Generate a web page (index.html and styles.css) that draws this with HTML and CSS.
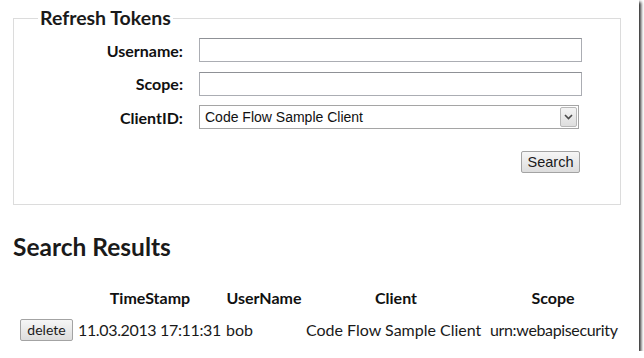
FILE: index.html
```html
<!DOCTYPE html>
<html lang="en">
<head>
    <meta charset="UTF-8">
    <title>Refresh Tokens</title>
    <link rel="stylesheet" href="styles.css">
</head>
<body>
    <div class="shot">
        <fieldset class="search-box">
            <legend>Refresh Tokens</legend>
            <div class="form-grid">
                <label for="username">Username:</label>
                <input type="text" id="username">

                <label for="scope">Scope:</label>
                <input type="text" id="scope">

                <label for="client">ClientID:</label>
                <div class="select-wrap">
                    <select id="client">
                        <option>Code Flow Sample Client</option>
                    </select>
                    <span class="select-arrow">
                        <svg width="9" height="6" viewBox="0 0 9 6">
                            <path d="M1 1 L4.5 4.5 L8 1" fill="none" stroke="#4a4a4a" stroke-width="1.6"/>
                        </svg>
                    </span>
                </div>

                <span></span>
                <button class="btn search-btn">Search</button>
            </div>
        </fieldset>

        <h2>Search Results</h2>

        <table class="results">
            <thead>
                <tr>
                    <th class="col-action"></th>
                    <th class="col-time">TimeStamp</th>
                    <th class="col-user">UserName</th>
                    <th class="col-client">Client</th>
                    <th class="col-scope">Scope</th>
                </tr>
            </thead>
            <tbody>
                <tr>
                    <td><button class="btn delete-btn">delete</button></td>
                    <td class="tight">11.03.2013 17:11:31</td>
                    <td>bob</td>
                    <td>Code Flow Sample Client</td>
                    <td class="tight">urn:webapisecurity</td>
                </tr>
            </tbody>
        </table>
    </div>
</body>
</html>
```

FILE: styles.css
```css
* {
    box-sizing: border-box;
}

body {
    margin: 0;
    background-color: #fff;
    font-family: Lato, 'Open Sans', sans-serif;
    color: #1a1a1a;
}

.shot {
    width: 639px;
    height: 351px;
    padding: 0 0 0 13px;
    background-color: #fff;
    box-shadow: 2px 2px 3px rgba(0, 0, 0, 0.85);
    overflow: hidden;
}

.search-box {
    width: 608px;
    margin: 7px 0 0 0;
    padding: 0 0 31px 0;
    border: 1px solid #dcdcdc;
}

.search-box legend {
    margin-left: 24px;
    padding: 0 2px;
    font-size: 19.5px;
    line-height: 22px;
    font-weight: bold;
}

.form-grid {
    display: grid;
    grid-template-columns: 169px 383px;
    column-gap: 16px;
    row-gap: 9.5px;
    align-items: center;
    margin-top: 9px;
}

.form-grid label {
    text-align: right;
    font-size: 16px;
    font-weight: bold;
    color: #111;
}

.form-grid input {
    height: 24px;
    border: 1px solid #abadb3;
    border-top-color: #8f9196;
    padding: 2px 5px;
    font-family: 'Liberation Sans', Arial, sans-serif;
    font-size: 14px;
}

.select-wrap {
    position: relative;
    width: 380px;
    height: 24px;
}

.select-wrap select {
    appearance: none;
    width: 100%;
    height: 100%;
    border: 1px solid #a5a5a5;
    border-radius: 0;
    background-color: #fff;
    padding: 0 0 0 5px;
    font-family: 'Liberation Sans', Arial, sans-serif;
    font-size: 14px;
    color: #111;
}

.select-arrow {
    position: absolute;
    top: 2px;
    right: 2px;
    width: 17px;
    height: 20px;
    display: flex;
    align-items: center;
    justify-content: center;
    border: 1px solid #b8b8b8;
    border-radius: 2px;
    background: linear-gradient(#f4f4f4, #dedede);
    pointer-events: none;
}

.btn {
    border: 1px solid #a3a3a3;
    border-radius: 2px;
    background: linear-gradient(#f6f6f6, #dddddd);
    color: #1a1a1a;
    cursor: pointer;
}

.search-btn {
    justify-self: end;
    margin: 12px 2px 0 0;
    width: 59px;
    height: 22px;
    padding: 0;
    font-family: 'Liberation Sans', Arial, sans-serif;
    font-size: 14.5px;
}

h2 {
    margin: 27px 0 0 0;
    font-size: 24.5px;
    line-height: 30px;
    font-weight: bold;
}

.results {
    table-layout: fixed;
    width: 602px;
    margin: 23px 0 0 4px;
    border-spacing: 2px;
    font-size: 16px;
    white-space: nowrap;
}

.results th {
    padding: 1px 1px 9px 1px;
    font-size: 16px;
    font-weight: bold;
    text-align: center;
    color: #111;
}

.results td {
    padding: 1px;
    text-align: left;
}

.results td.tight {
    letter-spacing: -0.35px;
}

.col-action { width: 56px; }
.col-time { width: 146px; }
.col-user { width: 78px; }
.col-client { width: 182px; }
.col-scope { width: 128px; }

.delete-btn {
    width: 53px;
    height: 22px;
    padding: 0;
    font-family: Lato, sans-serif;
    font-size: 14px;
}
```
